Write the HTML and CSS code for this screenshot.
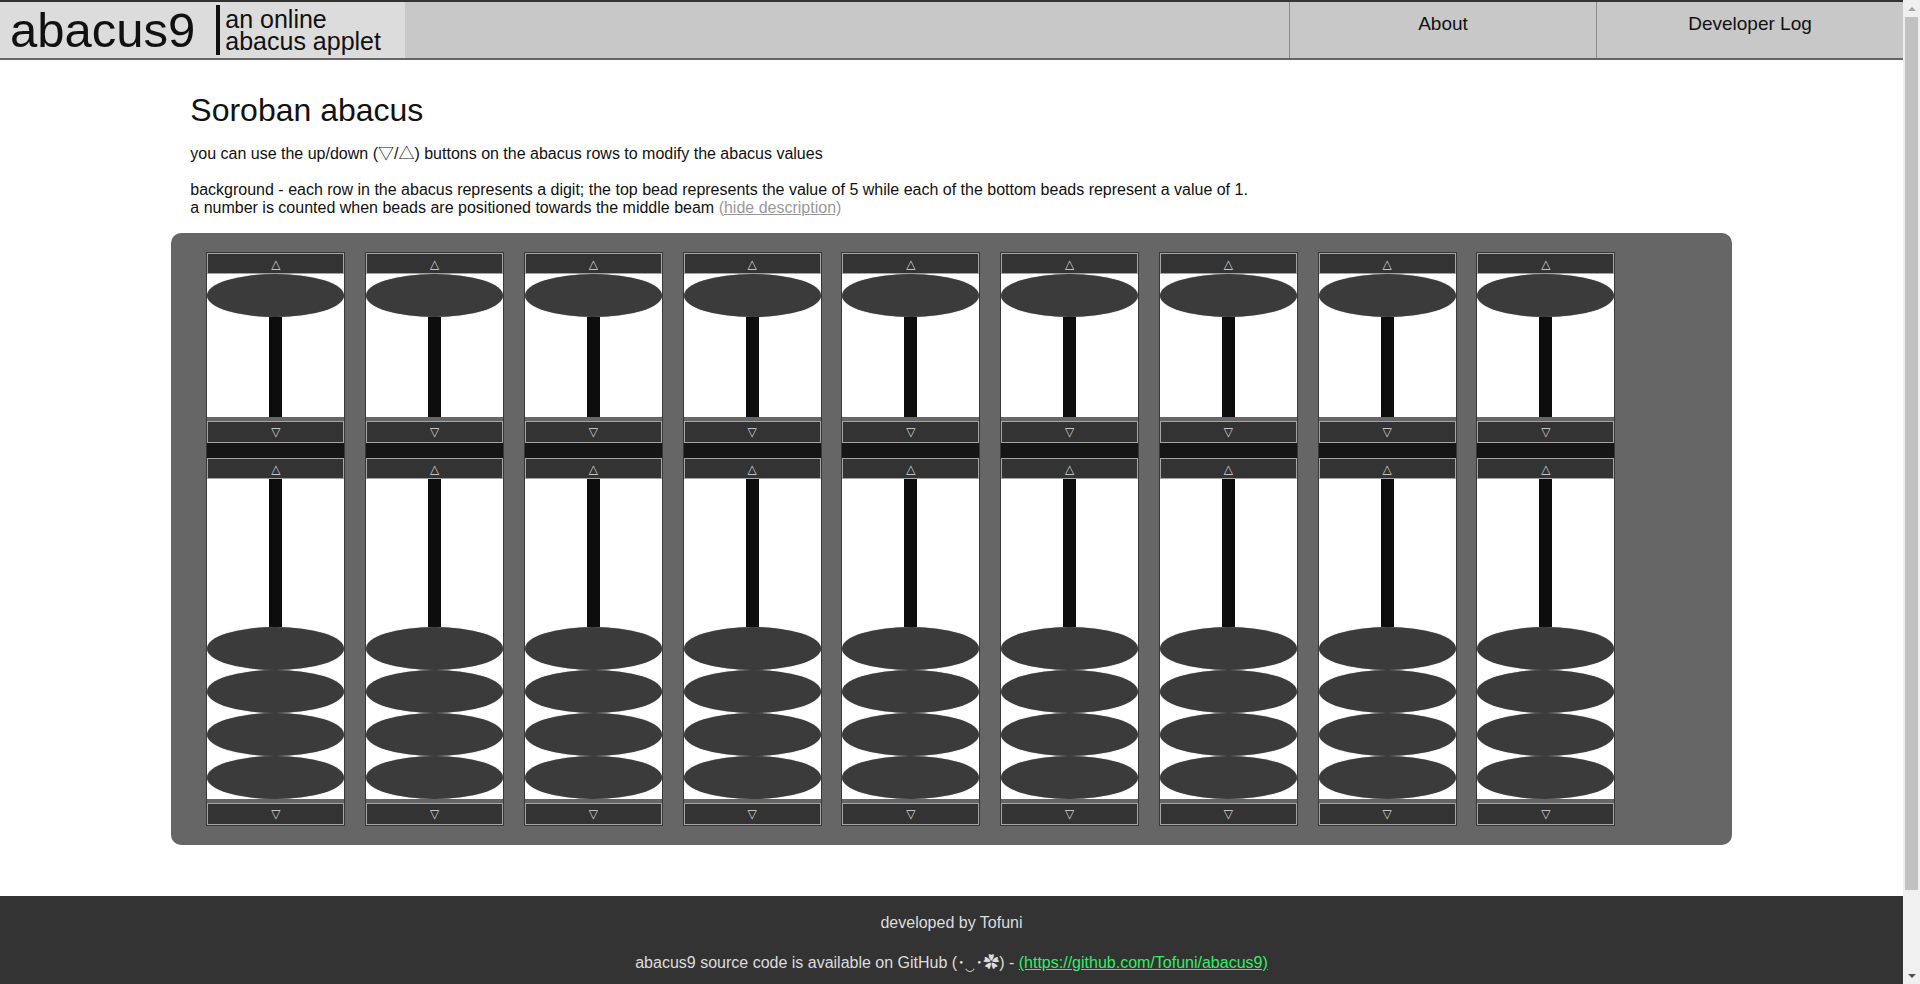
FILE: index.html
```html
<!DOCTYPE html>
<html lang="en">
<head>
<meta charset="utf-8">
<title>abacus9 - an online abacus applet</title>
<link rel="stylesheet" href="styles.css">
</head>
<body>
<header class="topbar">
  <div class="brand">
    <span class="brand-name">abacus9</span>
    <span class="brand-tag">an online<br>abacus applet</span>
  </div>
  <nav class="nav">
    <a class="nav-item" href="#">About</a>
    <a class="nav-item" href="#">Developer Log</a>
  </nav>
</header>

<main class="content">
  <h1 class="title">Soroban abacus</h1>
  <p class="desc">you can use the up/down (▽/△) buttons on the abacus rows to modify the abacus values</p>
  <p class="desc">background - each row in the abacus represents a digit; the top bead represents the value of 5 while each of the bottom beads represent a value of 1.<br>a number is counted when beads are positioned towards the middle beam <a class="hide-link" href="#">(hide description)</a></p>
</main>

<section class="abacus">
  <div class="rod">
    <button class="rod-btn">△</button>
    <div class="deck deck-upper"><div class="bead"></div><div class="rod-line"></div></div>
    <button class="rod-btn rod-btn-down">▽</button>
    <div class="beam"></div>
    <button class="rod-btn">△</button>
    <div class="deck deck-lower"><div class="rod-line"></div><div class="bead"></div><div class="bead"></div><div class="bead"></div><div class="bead"></div></div>
    <button class="rod-btn rod-btn-down">▽</button>
  </div>
  <div class="rod">
    <button class="rod-btn">△</button>
    <div class="deck deck-upper"><div class="bead"></div><div class="rod-line"></div></div>
    <button class="rod-btn rod-btn-down">▽</button>
    <div class="beam"></div>
    <button class="rod-btn">△</button>
    <div class="deck deck-lower"><div class="rod-line"></div><div class="bead"></div><div class="bead"></div><div class="bead"></div><div class="bead"></div></div>
    <button class="rod-btn rod-btn-down">▽</button>
  </div>
  <div class="rod">
    <button class="rod-btn">△</button>
    <div class="deck deck-upper"><div class="bead"></div><div class="rod-line"></div></div>
    <button class="rod-btn rod-btn-down">▽</button>
    <div class="beam"></div>
    <button class="rod-btn">△</button>
    <div class="deck deck-lower"><div class="rod-line"></div><div class="bead"></div><div class="bead"></div><div class="bead"></div><div class="bead"></div></div>
    <button class="rod-btn rod-btn-down">▽</button>
  </div>
  <div class="rod">
    <button class="rod-btn">△</button>
    <div class="deck deck-upper"><div class="bead"></div><div class="rod-line"></div></div>
    <button class="rod-btn rod-btn-down">▽</button>
    <div class="beam"></div>
    <button class="rod-btn">△</button>
    <div class="deck deck-lower"><div class="rod-line"></div><div class="bead"></div><div class="bead"></div><div class="bead"></div><div class="bead"></div></div>
    <button class="rod-btn rod-btn-down">▽</button>
  </div>
  <div class="rod">
    <button class="rod-btn">△</button>
    <div class="deck deck-upper"><div class="bead"></div><div class="rod-line"></div></div>
    <button class="rod-btn rod-btn-down">▽</button>
    <div class="beam"></div>
    <button class="rod-btn">△</button>
    <div class="deck deck-lower"><div class="rod-line"></div><div class="bead"></div><div class="bead"></div><div class="bead"></div><div class="bead"></div></div>
    <button class="rod-btn rod-btn-down">▽</button>
  </div>
  <div class="rod">
    <button class="rod-btn">△</button>
    <div class="deck deck-upper"><div class="bead"></div><div class="rod-line"></div></div>
    <button class="rod-btn rod-btn-down">▽</button>
    <div class="beam"></div>
    <button class="rod-btn">△</button>
    <div class="deck deck-lower"><div class="rod-line"></div><div class="bead"></div><div class="bead"></div><div class="bead"></div><div class="bead"></div></div>
    <button class="rod-btn rod-btn-down">▽</button>
  </div>
  <div class="rod">
    <button class="rod-btn">△</button>
    <div class="deck deck-upper"><div class="bead"></div><div class="rod-line"></div></div>
    <button class="rod-btn rod-btn-down">▽</button>
    <div class="beam"></div>
    <button class="rod-btn">△</button>
    <div class="deck deck-lower"><div class="rod-line"></div><div class="bead"></div><div class="bead"></div><div class="bead"></div><div class="bead"></div></div>
    <button class="rod-btn rod-btn-down">▽</button>
  </div>
  <div class="rod">
    <button class="rod-btn">△</button>
    <div class="deck deck-upper"><div class="bead"></div><div class="rod-line"></div></div>
    <button class="rod-btn rod-btn-down">▽</button>
    <div class="beam"></div>
    <button class="rod-btn">△</button>
    <div class="deck deck-lower"><div class="rod-line"></div><div class="bead"></div><div class="bead"></div><div class="bead"></div><div class="bead"></div></div>
    <button class="rod-btn rod-btn-down">▽</button>
  </div>
  <div class="rod">
    <button class="rod-btn">△</button>
    <div class="deck deck-upper"><div class="bead"></div><div class="rod-line"></div></div>
    <button class="rod-btn rod-btn-down">▽</button>
    <div class="beam"></div>
    <button class="rod-btn">△</button>
    <div class="deck deck-lower"><div class="rod-line"></div><div class="bead"></div><div class="bead"></div><div class="bead"></div><div class="bead"></div></div>
    <button class="rod-btn rod-btn-down">▽</button>
  </div>
</section>

<footer class="footer">
  <p class="footer-line">developed by Tofuni</p>
  <p class="footer-line">abacus9 source code is available on GitHub (･‿･✿) - <a class="footer-link" href="#">(https://github.com/Tofuni/abacus9)</a></p>
</footer>

<div class="scrollbar" aria-hidden="true">
  <span class="sb-arrow"><span class="sb-tri sb-tri-up"></span></span>
  <span class="sb-track"><span class="sb-thumb"></span></span>
  <span class="sb-arrow"><span class="sb-tri sb-tri-down"></span></span>
</div>
</body>
</html>
```

FILE: styles.css
```css
* {
  box-sizing: border-box;
}

body {
  margin: 0 17px 0 0;
  font-family: "Liberation Sans", Arial, "Noto Sans CJK JP", sans-serif;
  color: #111;
  background: #fff;
}

/* ---------- header ---------- */
.topbar {
  display: flex;
  height: 60px;
  border-top: 2px solid #333;
  border-bottom: 2px solid #666;
  background: #c8c8c8;
}

.brand {
  width: 405px;
  background: #dcdcdc;
  display: flex;
  align-items: center;
  padding-left: 10px;
}

.brand-name {
  font-size: 49px;
  line-height: 1;
}

.brand-tag {
  margin-left: 21px;
  padding-left: 5px;
  border-left: 4px solid #111;
  font-size: 25px;
  line-height: 22px;
  padding-top: 3px;
  padding-bottom: 3px;
}

.nav {
  margin-left: auto;
  display: flex;
}

.nav-item {
  width: 307px;
  border-left: 1px solid #8a8a8a;
  text-align: center;
  font-size: 19px;
  color: #111;
  text-decoration: none;
  padding-top: 11px;
}

/* ---------- intro ---------- */
.content {
  margin: 0 10%;
}

.title {
  font-size: 32px;
  font-weight: normal;
  margin: 32px 0 11px;
}

.desc {
  font-size: 16px;
  margin: 0 0 17px;
}

.desc:last-child {
  margin-bottom: 16px;
}

.hide-link {
  color: #999;
}

/* ---------- abacus ---------- */
.abacus {
  margin: 0 9% 51px;
  background: #666;
  border-radius: 10px;
  padding: 19px 35px;
  display: flex;
  gap: 19.75px;
}

.rod {
  width: 139px;
  border: 1px solid #383838;
  background: #666;
  display: flex;
  flex-direction: column;
}

.rod-btn {
  height: 21px;
  padding: 0;
  margin: 0;
  background: #333;
  border: 1px solid #a5a5a5;
  color: #ddd;
  font: 12px "DejaVu Sans", sans-serif;
  display: flex;
  align-items: center;
  justify-content: center;
}

.rod-btn-down {
  margin-top: 4px;
  height: 22px;
}

.deck {
  background: #fff;
  display: flex;
  flex-direction: column;
  align-items: center;
}

.deck-upper {
  height: 143px;
}

.deck-lower {
  height: 320px;
}

.rod-line {
  flex: 1;
  width: 13px;
  background: #0d0d0d;
}

.bead {
  flex: none;
  width: 100%;
  height: 43px;
  border-radius: 50%;
  background: #3b3b3b;
  box-shadow: 0 0 1px 0 rgba(59, 59, 59, 0.6);
}

.beam {
  height: 15px;
  background: #161616;
}

/* ---------- footer ---------- */
.footer {
  background: #333;
  color: #ddd;
  text-align: center;
  padding: 1px 0 2px;
}

.footer-line {
  font-size: 16px;
  margin: 17px 0;
}

.footer-link {
  color: #3e6;
}

/* ---------- window scrollbar (browser chrome) ---------- */
.scrollbar {
  position: fixed;
  top: 0;
  right: 0;
  width: 17px;
  height: 100vh;
  background: #f0f0f0;
  display: flex;
  flex-direction: column;
}

.sb-arrow {
  flex: none;
  height: 17px;
  display: flex;
  align-items: center;
  justify-content: center;
}

.sb-tri {
  width: 0;
  height: 0;
  border-left: 4px solid transparent;
  border-right: 4px solid transparent;
}

.sb-tri-up {
  border-bottom: 4px solid #a3a3a3;
}

.sb-tri-down {
  border-top: 4px solid #505050;
}

.sb-track {
  flex: 1;
  padding: 0 2px 77px;
  display: flex;
}

.sb-thumb {
  flex: 1;
  background: #c1c1c1;
}
```
